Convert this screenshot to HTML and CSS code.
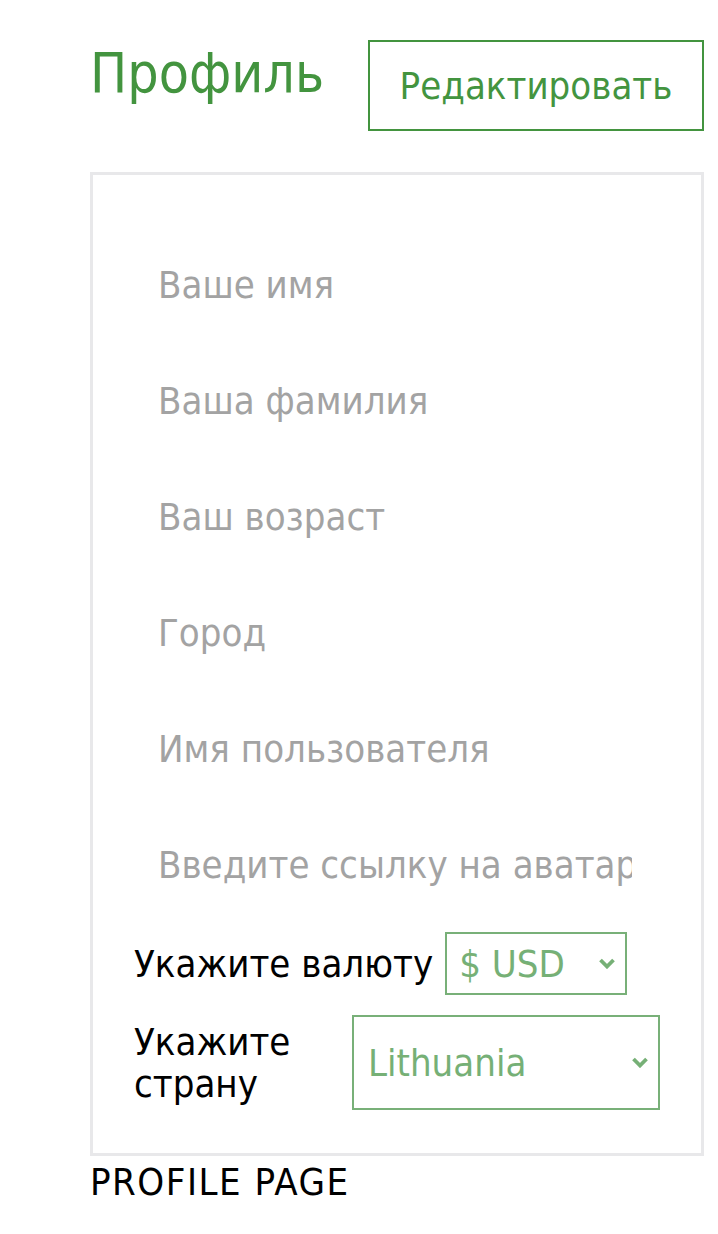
FILE: index.html
```html
<!DOCTYPE html>
<html lang="ru">
<head>
<meta charset="utf-8">
<title>Профиль</title>
<link rel="stylesheet" href="styles.css">
</head>
<body>
<div class="page">
  <header class="header">
    <h1 class="title">Профиль</h1>
    <button class="edit-btn" type="button">Редактировать</button>
  </header>
  <section class="card">
    <div class="fields">
      <input class="field" type="text" placeholder="Ваше имя">
      <input class="field" type="text" placeholder="Ваша фамилия">
      <input class="field" type="text" placeholder="Ваш возраст">
      <input class="field" type="text" placeholder="Город">
      <input class="field" type="text" placeholder="Имя пользователя">
      <input class="field" type="text" placeholder="Введите ссылку на аватар">
    </div>
    <div class="choices">
      <div class="choice-row">
        <span class="choice-label">Укажите валюту</span>
        <div class="select select-currency">
          <span class="select-value">$ USD</span>
          <svg class="chevron" width="18" height="11" viewBox="0 0 18 11"><polyline points="2.5,2 9,8.5 15.5,2" fill="none" stroke="#76b076" stroke-width="3.8"/></svg>
        </div>
      </div>
      <div class="choice-row row-second">
        <span class="choice-label">Укажите страну</span>
        <div class="select select-country">
          <span class="select-value">Lithuania</span>
          <svg class="chevron" width="18" height="11" viewBox="0 0 18 11"><polyline points="2.5,2 9,8.5 15.5,2" fill="none" stroke="#76b076" stroke-width="3.8"/></svg>
        </div>
      </div>
    </div>
  </section>
  <div class="footer-label">PROFILE PAGE</div>
</div>
</body>
</html>
```
FILE: styles.css
```css
* { box-sizing: border-box; }
html, body {
  margin: 0;
  padding: 0;
  background: #ffffff;
}
body {
  font-family: "DejaVu Sans Condensed", "DejaVu Sans", sans-serif;
  font-stretch: condensed;
  color: #000000;
}
.page {
  margin-left: 90px;
  width: 614px;
  padding-top: 40px;
}
.header {
  display: flex;
  justify-content: space-between;
  align-items: flex-start;
}
.title {
  margin: 1px 0 0 0;
  font-size: 55px;
  font-weight: normal;
  line-height: 1.164;
  color: #43943f;
}
.edit-btn {
  width: 336px;
  height: 91px;
  border: 2px solid #43943f;
  background: #ffffff;
  color: #43943f;
  font-family: inherit;
  font-stretch: condensed;
  font-size: 38px;
  padding: 0;
  text-align: center;
}
.card {
  margin-top: 41px;
  height: 984px;
  border: 3px solid #e8e8ea;
}
.fields {
  padding-top: 88px;
  padding-left: 65px;
  display: flex;
  flex-direction: column;
  gap: 72px;
}
.field {
  display: block;
  width: 474px;
  height: 44px;
  border: none;
  outline: none;
  background: transparent;
  padding: 0;
  font-family: inherit;
  font-stretch: condensed;
  font-size: 38px;
  color: #000;
}
.field::placeholder {
  color: #a3a3a3;
  opacity: 1;
}
.choices {
  margin-top: 45px;
  padding-left: 41px;
}
.choice-row {
  display: flex;
  align-items: center;
  gap: 12px;
  width: 526px;
}
.row-second {
  margin-top: 20px;
}
.choice-label {
  font-size: 38px;
  line-height: 42px;
}
.select {
  flex-shrink: 0;
  display: flex;
  align-items: center;
  justify-content: space-between;
  border: 2px solid #78b078;
  color: #76b076;
  font-size: 38px;
  line-height: 42px;
  padding-left: 12px;
  padding-right: 9px;
}
.select-currency {
  width: 182px;
  height: 63px;
}
.select-country {
  width: 308px;
  height: 95px;
  padding-left: 14px;
}
.chevron {
  display: block;
  flex-shrink: 0;
}
.footer-label {
  margin-top: 4px;
  font-size: 38px;
  line-height: 1.164;
  letter-spacing: 1.5px;
}
```
